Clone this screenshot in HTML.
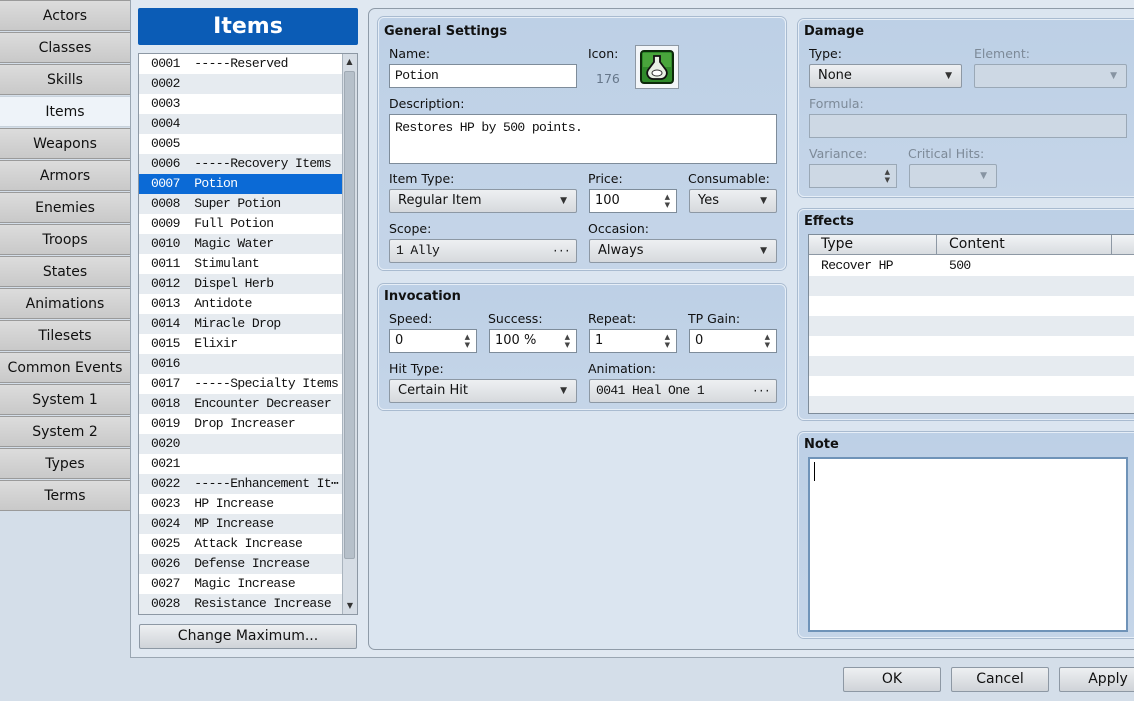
<!DOCTYPE html><html><head><style>
*{box-sizing:border-box;margin:0;padding:0}
body{width:1134px;height:701px;overflow:hidden;background:#d4dee9;font-family:"DejaVu Sans","Liberation Sans",sans-serif;font-size:13px;color:#111;position:relative}
.a{position:absolute}
.nav{left:0;width:131px;height:31px;background:linear-gradient(#dcdcdc,#c9c9c9);border:1px solid #9a9a9a;border-left:none;text-align:center;line-height:30px;font-size:14px}
.nav.sel{background:#eef3f9;border-color:#c8d2dc}
.mono{font-family:"Liberation Mono","DejaVu Sans Mono",monospace;font-size:13px;letter-spacing:-0.6px}
.row{position:absolute;left:0;width:203px;height:20px;line-height:20px;padding-left:12px;white-space:pre}
.panel{position:absolute;background:linear-gradient(#bdd0e6,#c5d5e8);border:1px solid #e6eef7;border-radius:6px;box-shadow:0 0 0 1px #a9bbd0}
.ttl{position:absolute;font-weight:bold;font-size:13px}
.lbl{position:absolute;font-size:12.5px}
.dis{color:#7d8a98}
.inp{position:absolute;background:#fff;border:1px solid #7e8c9a;height:24px;line-height:22px;padding-left:5px}
.cmb{position:absolute;background:linear-gradient(#eef0f2,#d6d9dd);border:1px solid #8d98a4;border-radius:2px;height:24px;line-height:22px;padding-left:8px}
.cmb:after{content:"▼";position:absolute;right:9px;top:0;font-size:9px;color:#333}
.cmb.d{background:#cdd8e4;border-color:#9aa8b6}
.cmb.d:after{color:#8794a2}
.dots:after{content:"···";font-size:11px}
.spin:after{content:"▲\A▼";white-space:pre;position:absolute;right:6px;top:3px;font-size:7px;line-height:8px;color:#444}
.btn{position:absolute;background:linear-gradient(#eef0f2,#cfd3d8);border:1px solid #8d98a4;border-radius:2px;text-align:center;height:25px;line-height:23px;font-size:14px}
.cmb.mono:after{content:""}
</style></head><body>
<div class="a nav" style="top:0">Actors</div>
<div class="a nav" style="top:32px">Classes</div>
<div class="a nav" style="top:64px">Skills</div>
<div class="a nav sel" style="top:96px">Items</div>
<div class="a nav" style="top:128px">Weapons</div>
<div class="a nav" style="top:160px">Armors</div>
<div class="a nav" style="top:192px">Enemies</div>
<div class="a nav" style="top:224px">Troops</div>
<div class="a nav" style="top:256px">States</div>
<div class="a nav" style="top:288px">Animations</div>
<div class="a nav" style="top:320px">Tilesets</div>
<div class="a nav" style="top:352px">Common Events</div>
<div class="a nav" style="top:384px">System 1</div>
<div class="a nav" style="top:416px">System 2</div>
<div class="a nav" style="top:448px">Types</div>
<div class="a nav" style="top:480px">Terms</div>
<div class="a" style="left:130px;top:0;width:1010px;height:658px;background:#e0e8f1;border-left:1px solid #9aa6b2;border-bottom:1px solid #9aa6b2"></div>
<div class="a" style="left:138px;top:8px;width:220px;height:37px;background:#0b5cb6;border-radius:2px;color:#fff;font-weight:bold;font-size:22px;text-align:center;line-height:37px">Items</div>
<div class="a" style="left:138px;top:53px;width:220px;height:562px;border:1px solid #8d98a4;background:#fff;overflow:hidden">
<div class="mono" style="position:relative">
<div class="row" style="top:0;background:#fff">0001  -----Reserved</div>
<div class="row" style="top:20px;background:#e6ebf0">0002</div>
<div class="row" style="top:40px;background:#fff">0003</div>
<div class="row" style="top:60px;background:#e6ebf0">0004</div>
<div class="row" style="top:80px;background:#fff">0005</div>
<div class="row" style="top:100px;background:#e6ebf0">0006  -----Recovery Items</div>
<div class="row" style="top:120px;background:#0b6ad6;color:#fff">0007  Potion</div>
<div class="row" style="top:140px;background:#e6ebf0">0008  Super Potion</div>
<div class="row" style="top:160px;background:#fff">0009  Full Potion</div>
<div class="row" style="top:180px;background:#e6ebf0">0010  Magic Water</div>
<div class="row" style="top:200px;background:#fff">0011  Stimulant</div>
<div class="row" style="top:220px;background:#e6ebf0">0012  Dispel Herb</div>
<div class="row" style="top:240px;background:#fff">0013  Antidote</div>
<div class="row" style="top:260px;background:#e6ebf0">0014  Miracle Drop</div>
<div class="row" style="top:280px;background:#fff">0015  Elixir</div>
<div class="row" style="top:300px;background:#e6ebf0">0016</div>
<div class="row" style="top:320px;background:#fff">0017  -----Specialty Items</div>
<div class="row" style="top:340px;background:#e6ebf0">0018  Encounter Decreaser</div>
<div class="row" style="top:360px;background:#fff">0019  Drop Increaser</div>
<div class="row" style="top:380px;background:#e6ebf0">0020</div>
<div class="row" style="top:400px;background:#fff">0021</div>
<div class="row" style="top:420px;background:#e6ebf0">0022  -----Enhancement It⋯</div>
<div class="row" style="top:440px;background:#fff">0023  HP Increase</div>
<div class="row" style="top:460px;background:#e6ebf0">0024  MP Increase</div>
<div class="row" style="top:480px;background:#fff">0025  Attack Increase</div>
<div class="row" style="top:500px;background:#e6ebf0">0026  Defense Increase</div>
<div class="row" style="top:520px;background:#fff">0027  Magic Increase</div>
<div class="row" style="top:540px;background:#e6ebf0">0028  Resistance Increase</div>
</div>
<div class="a" style="left:203px;top:0;width:15px;height:560px;background:#d6dde5;border-left:1px solid #aab4be"></div>
<div class="a" style="left:203px;top:0;width:15px;height:16px;font-size:8px;text-align:center;line-height:16px;color:#333">▲</div>
<div class="a" style="left:204px;top:544px;width:14px;height:16px;font-size:8px;text-align:center;line-height:16px;color:#333">▼</div>
<div class="a" style="left:205px;top:17px;width:11px;height:488px;background:#b6c0ca;border:1px solid #a0aab4;border-radius:2px"></div>
</div>
<div class="btn" style="left:139px;top:624px;width:218px">Change Maximum...</div>

<div class="a" style="left:368px;top:8px;width:780px;height:642px;border:1px solid #8f9ba8;border-radius:7px;background:#dbe5f0"></div>

<div class="panel" style="left:378px;top:17px;width:408px;height:253px"></div>
<div class="ttl" style="left:384px;top:24px">General Settings</div>
<div class="lbl" style="left:389px;top:46px">Name:</div>
<div class="inp mono" style="left:389px;top:64px;width:188px">Potion</div>
<div class="lbl" style="left:588px;top:46px">Icon:</div>
<div class="lbl" style="left:596px;top:71px;color:#66778a">176</div>
<div class="a" style="left:635px;top:45px;width:44px;height:44px;background:#f3f6f9;border:1px solid #8d98a4">
<svg width="42" height="42" viewBox="0 0 42 42"><rect x="5" y="5" width="32" height="32" rx="3" fill="#2f8a2a" stroke="#0d2a0b" stroke-width="2"/><rect x="7" y="7" width="28" height="14" fill="#5cb84a" opacity=".6"/><path d="M18 10h6v6l6 8a6 6 0 0 1-5 9h-8a6 6 0 0 1-5-9l6-8z" fill="#e8efe4" stroke="#111" stroke-width="1.8"/><ellipse cx="21" cy="27" rx="5" ry="3" fill="#fff" stroke="#333" stroke-width="1"/></svg></div>
<div class="lbl" style="left:389px;top:96px">Description:</div>
<div class="inp mono" style="left:389px;top:114px;width:388px;height:50px;line-height:26px">Restores HP by 500 points.</div>
<div class="lbl" style="left:389px;top:171px">Item Type:</div>
<div class="cmb" style="left:389px;top:189px;width:188px">Regular Item</div>
<div class="lbl" style="left:588px;top:171px">Price:</div>
<div class="inp spin" style="left:589px;top:189px;width:88px">100</div>
<div class="lbl" style="left:688px;top:171px">Consumable:</div>
<div class="cmb" style="left:689px;top:189px;width:88px">Yes</div>
<div class="lbl" style="left:389px;top:221px">Scope:</div>
<div class="cmb mono" style="left:389px;top:239px;width:188px;padding-left:6px">1 Ally<span class="a dots" style="right:6px;top:0"></span></div>
<div class="lbl" style="left:588px;top:221px">Occasion:</div>
<div class="cmb" style="left:589px;top:239px;width:188px">Always</div>

<div class="panel" style="left:378px;top:284px;width:408px;height:126px"></div>
<div class="ttl" style="left:384px;top:289px">Invocation</div>
<div class="lbl" style="left:389px;top:311px">Speed:</div>
<div class="inp spin" style="left:389px;top:329px;width:88px">0</div>
<div class="lbl" style="left:488px;top:311px">Success:</div>
<div class="inp spin" style="left:489px;top:329px;width:88px">100 %</div>
<div class="lbl" style="left:588px;top:311px">Repeat:</div>
<div class="inp spin" style="left:589px;top:329px;width:88px">1</div>
<div class="lbl" style="left:688px;top:311px">TP Gain:</div>
<div class="inp spin" style="left:689px;top:329px;width:88px">0</div>
<div class="lbl" style="left:389px;top:361px">Hit Type:</div>
<div class="cmb" style="left:389px;top:379px;width:188px">Certain Hit</div>
<div class="lbl" style="left:588px;top:361px">Animation:</div>
<div class="cmb mono" style="left:589px;top:379px;width:188px;padding-left:6px">0041 Heal One 1<span class="a dots" style="right:6px;top:0"></span></div>

<div class="panel" style="left:798px;top:19px;width:345px;height:178px"></div>
<div class="ttl" style="left:804px;top:24px">Damage</div>
<div class="lbl" style="left:809px;top:46px">Type:</div>
<div class="cmb" style="left:809px;top:64px;width:153px">None</div>
<div class="lbl dis" style="left:974px;top:46px">Element:</div>
<div class="cmb d" style="left:974px;top:64px;width:153px"></div>
<div class="lbl dis" style="left:809px;top:96px">Formula:</div>
<div class="inp" style="left:809px;top:114px;width:318px;background:#cdd8e4;border-color:#9aa8b6"></div>
<div class="lbl dis" style="left:809px;top:146px">Variance:</div>
<div class="inp spin" style="left:809px;top:164px;width:88px;background:#cdd8e4;border-color:#9aa8b6"></div>
<div class="lbl dis" style="left:908px;top:146px">Critical Hits:</div>
<div class="cmb d" style="left:909px;top:164px;width:88px"></div>

<div class="panel" style="left:798px;top:209px;width:345px;height:211px"></div>
<div class="ttl" style="left:804px;top:214px">Effects</div>
<div class="a" style="left:808px;top:234px;width:330px;height:180px;border:1px solid #7e8c9a;background:#fff;overflow:hidden">
<div class="a" style="left:0;top:0;width:330px;height:20px;background:linear-gradient(#f2f4f6,#d8dce0);border-bottom:1px solid #8d98a4"></div>
<div class="a" style="left:12px;top:1px;font-size:14px">Type</div>
<div class="a" style="left:127px;top:0;height:20px;border-left:1px solid #8d98a4"></div>
<div class="a" style="left:140px;top:1px;font-size:14px">Content</div>
<div class="a" style="left:302px;top:0;height:20px;border-left:1px solid #8d98a4"></div>
<div class="a mono" style="left:12px;top:21px;line-height:20px">Recover HP</div>
<div class="a mono" style="left:140px;top:21px;line-height:20px">500</div>
<div class="a" style="left:0;top:41px;width:330px;height:20px;background:#e6ebf0"></div>
<div class="a" style="left:0;top:81px;width:330px;height:20px;background:#e6ebf0"></div>
<div class="a" style="left:0;top:121px;width:330px;height:20px;background:#e6ebf0"></div>
<div class="a" style="left:0;top:161px;width:330px;height:20px;background:#e6ebf0"></div>
</div>

<div class="panel" style="left:798px;top:432px;width:345px;height:206px"></div>
<div class="ttl" style="left:804px;top:437px">Note</div>
<div class="a" style="left:808px;top:457px;width:320px;height:175px;background:#fff;border:2px solid #6f93b8"></div>
<div class="a" style="left:814px;top:462px;width:1px;height:19px;background:#000"></div>

<div class="btn" style="left:843px;top:667px;width:98px">OK</div>
<div class="btn" style="left:951px;top:667px;width:98px">Cancel</div>
<div class="btn" style="left:1059px;top:667px;width:98px">Apply</div>
</body></html>
